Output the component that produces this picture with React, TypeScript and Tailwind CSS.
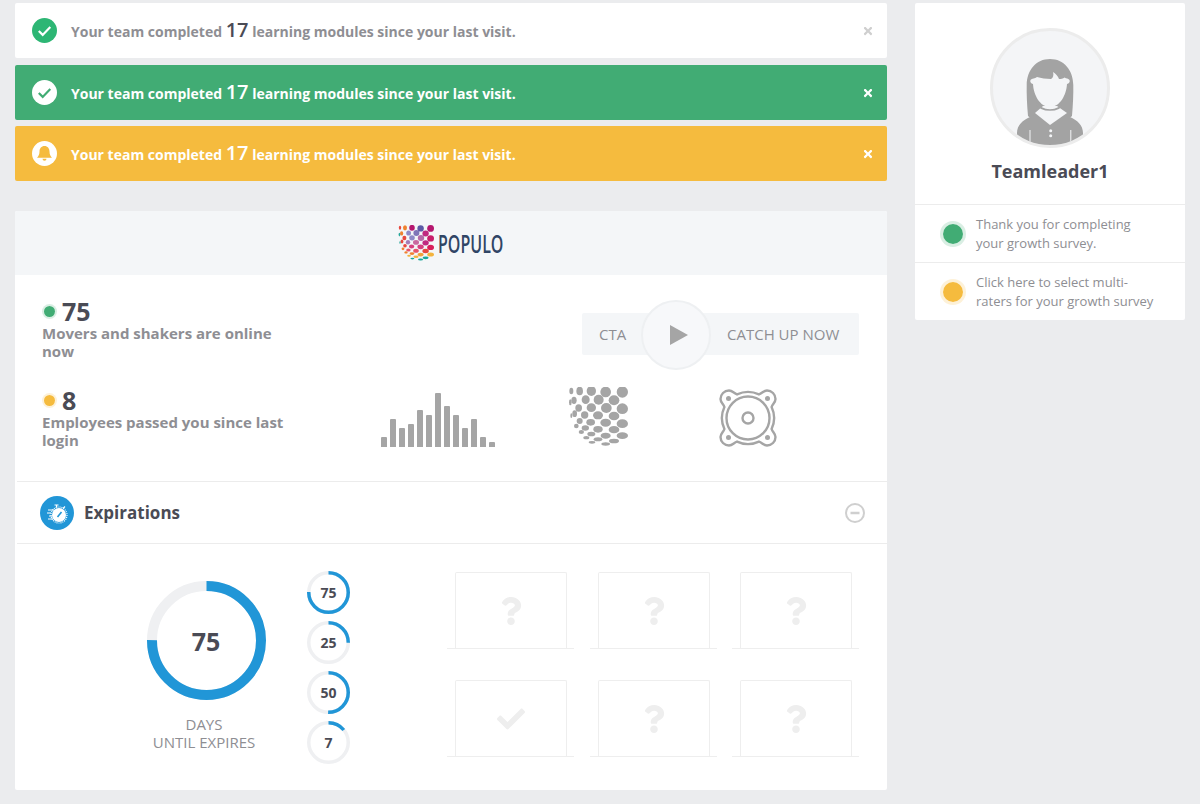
import { FaCheck, FaQuestion, FaTimes } from "react-icons/fa";

const font = { fontFamily: '"Open Sans", sans-serif' };

function CheckIcon({ bg, fg }: { bg: string; fg: string }) {
  return (
    <svg width="25" height="25" viewBox="0 0 25 25" className="shrink-0">
      <circle cx="12.5" cy="12.5" r="12.5" fill={bg} />
      <path d="M6.8 13l3.9 3.9 7.6-7.8" fill="none" stroke={fg} strokeWidth="2.2" />
    </svg>
  );
}

function BellIcon() {
  return (
    <svg width="25" height="25" viewBox="0 0 25 25" className="shrink-0">
      <circle cx="12.5" cy="12.5" r="12.5" fill="#fff" />
      <path
        d="M12.5 5c-3.100 0-5 2.400-5 5.500 0 3-.9 4.600-2.500 6.200h15c-1.600-1.600-2.500-3.200-2.500-6.200 0-3.100-1.900-5.500-5-5.500z"
        fill="#f5bb3e"
      />
      <path d="M10.500 17.700a2 2 0 0 0 4 0z" fill="#f5bb3e" />
    </svg>
  );
}

function Alert({
  className,
  icon,
  numClass,
  closeClass,
}: {
  className: string;
  icon: React.ReactNode;
  numClass: string;
  closeClass: string;
}) {
  return (
    <div className={`flex h-[55px] items-center rounded-[2px] pl-[17px] pr-[13px] ${className}`}>
      {icon}
      <p className="ml-[14px] flex-1 text-[14px] font-bold">
        Your team completed <span className={`text-[20px] font-semibold leading-none ${numClass}`}>17</span>{" "}
        learning modules since your last visit.
      </p>
      <FaTimes className={`mt-[1px] text-[12px] ${closeClass}`} />
    </div>
  );
}

// dot positions of the sphere mark: x, y, rx, ry
const sphere = [
  [50, 52, 6, 10], [75, 52, 10, 13], [110, 52, 14, 15], [153, 55, 16, 16], [203, 55, 17, 17],
  [58, 80, 8, 11], [93, 78, 12, 13], [132, 78, 15, 15], [178, 80, 16, 15],
  [47, 86, 4, 9], [72, 103, 10, 11], [110, 102, 14, 13], [155, 103, 16, 15], [203, 105, 17, 16],
  [60, 120, 7, 10], [90, 124, 11, 11], [130, 125, 15, 12], [178, 127, 16, 13],
  [50, 126, 3, 7], [75, 142, 9, 9], [108, 146, 13, 10], [153, 147, 16, 12], [203, 150, 17, 13],
  [65, 157, 7, 7], [92, 163, 11, 8], [130, 167, 14, 10], [178, 168, 16, 11],
  [80, 175, 8, 6], [110, 181, 12, 7], [153, 186, 15, 9], [203, 186, 17, 10],
  [95, 192, 9, 5], [130, 197, 13, 6], [178, 202, 15, 7],
  [112, 206, 10, 4], [153, 211, 13, 5],
];

const logoColors = [
  "#e8483f", "#f0812f", "#b5176f", "#5d5aa6", "#b5176f",
  "#f0812f", "#8f8ac7", "#7f76b8", "#c02a80",
  "#26a69a", "#e8483f", "#8f8ac7", "#b56aa8", "#c81e6b",
  "#e8483f", "#a47cb8", "#c9699f", "#c02a80",
  "#26a69a", "#e8483f", "#d6407f", "#d6407f", "#d81e5b",
  "#f0812f", "#e8566a", "#e8566a", "#e8483f",
  "#f0812f", "#f0812f", "#f0a03c", "#f3b33d",
  "#f3b33d", "#f3b33d", "#17a79a",
  "#17a79a", "#17a79a",
];

function PopuloMark() {
  return (
    <svg width="36" height="36" viewBox="40 38 180 180" className="shrink-0">
      {sphere.map(([x, y, rx, ry], i) => (
        <ellipse key={i} cx={x} cy={y} rx={rx} ry={ry} fill={logoColors[i]} />
      ))}
    </svg>
  );
}

function GreyMark() {
  return (
    <svg width="60" height="60" viewBox="40 40 180 180">
      {sphere.map(([x, y, rx, ry], i) => (
        <ellipse key={i} cx={x} cy={y} rx={rx} ry={ry} fill="#a5a5a5" />
      ))}
    </svg>
  );
}

function Bars() {
  const heights = [10, 28, 19, 23, 37, 32, 54, 41, 32, 19, 28, 10, 5];
  return (
    <div className="flex h-[54px] items-end gap-[3px]">
      {heights.map((h, i) => (
        <div key={i} className="w-[6px] rounded-t-[1px] bg-[#a5a5a5]" style={{ height: h }} />
      ))}
    </div>
  );
}

function Speaker() {
  return (
    <svg width="58" height="58" viewBox="0 0 58 58" fill="none" stroke="#a5a5a5" strokeWidth="2.4">
      <path d="M10 1.500c3.500 0 5 3 8 3.900a26 26 0 0 1 22 0c3-.9 4.500-3.900 8-3.900a8.500 8.500 0 0 1 8.500 8.500c0 3.500-3 5-3.900 8a26 26 0 0 1 0 22c.9 3 3.900 4.500 3.900 8a8.500 8.500 0 0 1-8.500 8.500c-3.500 0-5-3-8-3.900a26 26 0 0 1-22 0c-3 .9-4.500 3.900-8 3.900A8.500 8.500 0 0 1 1.500 48c0-3.500 3-5 3.900-8a26 26 0 0 1 0-22c-.9-3-3.900-4.500-3.900-8A8.500 8.500 0 0 1 10 1.500z" />
      <circle cx="29" cy="29" r="21.5" />
      <circle cx="29" cy="29" r="5.5" />
      <circle cx="9.500" cy="9.500" r="2.500" fill="#a5a5a5" stroke="none" />
      <circle cx="48.500" cy="9.500" r="2.500" fill="#a5a5a5" stroke="none" />
      <circle cx="9.500" cy="48.500" r="2.500" fill="#a5a5a5" stroke="none" />
      <circle cx="48.500" cy="48.500" r="2.500" fill="#a5a5a5" stroke="none" />
    </svg>
  );
}

function Gauge({
  size,
  stroke,
  pct,
  label,
  className,
}: {
  size: number;
  stroke: number;
  pct: number;
  label: string;
  className: string;
}) {
  const r = (size - stroke) / 2;
  const c = 2 * Math.PI * r;
  return (
    <div className="relative shrink-0" style={{ width: size, height: size }}>
      <svg width={size} height={size} className="-rotate-90">
        <circle cx={size / 2} cy={size / 2} r={r} fill="none" stroke="#eff0f2" strokeWidth={stroke} />
        <circle
          cx={size / 2}
          cy={size / 2}
          r={r}
          fill="none"
          stroke="#2196d7"
          strokeWidth={stroke}
          strokeDasharray={`${(c * pct) / 100} ${c}`}
        />
      </svg>
      <span className={`absolute inset-0 flex items-center justify-center font-bold text-[#4a4b55] ${className}`}>
        {label}
      </span>
    </div>
  );
}

function Stat({ num, label, dot, ring }: { num: string; label: string; dot: string; ring: string }) {
  return (
    <div className="h-[89px]">
      <div className="flex h-[28px] items-center pt-[2px]">
        <span className={`h-[15px] w-[15px] rounded-full border-[2px] ${dot} ${ring} bg-clip-padding`} />
        <span className="ml-[5px] text-[25px] font-bold leading-none text-[#4a4b55]">{num}</span>
      </div>
      <p className="w-[250px] text-[15px] font-bold leading-[18px] text-[#8e8e93]">{label}</p>
    </div>
  );
}

function Placeholder({ done }: { done?: boolean }) {
  return (
    <div className="border-b border-[#eeeeee] px-[8px]">
      <div className="flex h-[76px] w-[112px] items-center justify-center rounded-t-[2px] border border-b-0 border-[#eeeeee]">
        {done ? (
          <FaCheck className="text-[28px] text-[#eeeeee]" />
        ) : (
          <FaQuestion className="text-[28px] text-[#eeeeee]" />
        )}
      </div>
    </div>
  );
}

function Avatar() {
  return (
    <div className="h-[120px] w-[120px] overflow-hidden rounded-full border-[3px] border-[#ececec] bg-[#f4f5f7]">
      <svg width="114" height="114" viewBox="3 3 114 114">
        <path
          d="M60 31c-14 0-23 11-23.300 26-.2 9 .3 20 1.300 31l6 5h32l6-5c1-11 1.500-22 1.300-31C83 42 74 31 60 31z"
          fill="#a3a3a3"
        />
        <path d="M27 117v-12c0-8 6-13 13-16l6-3 14-7 14 7 6 3c7 3 13 8 13 16v12z" fill="#a3a3a3" />
        <path d="M45 85l8-7h14l10 7-17 12z" fill="#f4f5f7" />
        <path
          d="M47 49c-2 2-5 1-6.500 3-.9 1.600.6 3.500 2.500 4 .6 11 7 23 17 23s16.400-12 17-23c1.900-.5 3.400-2.400 2.500-4-1.500-2-3-1-5-2.500-1.500 1.500-3.500 1.500-5.500 1.500-1-3-3-5-6-7 1 3 0 6-2 7-5 0-10-1-14-2z"
          fill="#f4f5f7"
        />
        <path d="M46 75c3 5 8 7 14 7s11-2 14-7" fill="none" stroke="#a3a3a3" strokeWidth="1.600" />
        <path d="M40 102v14M80.800 102v14" stroke="#f4f5f7" strokeWidth="1" />
        <circle cx="60.700" cy="102.700" r="1.500" fill="#f4f5f7" />
        <circle cx="60.700" cy="107.700" r="1.500" fill="#f4f5f7" />
      </svg>
    </div>
  );
}

function StopwatchIcon() {
  return (
    <svg width="34" height="34" viewBox="0 0 34 34" className="shrink-0">
      <circle cx="17" cy="17" r="17" fill="#2196d7" />
      <circle cx="19" cy="19" r="7" fill="#fff" />
      <circle cx="19" cy="19" r="8" fill="none" stroke="#fff" strokeWidth="1.200" strokeDasharray="1 1" />
      <path d="M14.500 9h4M16.500 9v2.500M25 10.500l-2 2" stroke="#fff" strokeWidth="1.200" />
      <path d="M8 14h6M7 17h4M9 20h3M8 23h5" stroke="#fff" strokeWidth="1" />
      <path d="M17.500 21l4-5" stroke="#2196d7" strokeWidth="1.600" />
    </svg>
  );
}

function MinusIcon() {
  return (
    <svg width="20" height="20" viewBox="0 0 20 20" className="mt-[1px]">
      <circle cx="10" cy="10" r="9" fill="none" stroke="#cfcfcf" strokeWidth="2" />
      <path d="M5.500 10h9" stroke="#cfcfcf" strokeWidth="2.500" />
    </svg>
  );
}

function Note({ text, dot, ring }: { text: string[]; dot: string; ring: string }) {
  return (
    <div className="flex h-[58px] items-center border-t border-[#ececec] pl-[25px]">
      <span className={`h-[26px] w-[26px] shrink-0 rounded-full border-[3px] bg-clip-padding ${dot} ${ring}`} />
      <p className="ml-[10px] text-[13px] leading-[19px] text-[#8e8e93]">
        {text[0]}
        <br />
        {text[1]}
      </p>
    </div>
  );
}

export default function App() {
  return (
    <div className="flex min-h-screen items-start bg-[#ebecee] pl-[15px] pt-[3px]" style={font}>
      <div className="w-[872px] pb-[14px]">
        <Alert
          className="bg-white text-[#8e8e93]"
          icon={<CheckIcon bg="#2db674" fg="#fff" />}
          numClass="text-[#4a4b55]"
          closeClass="text-[#cfcfcf]"
        />
        <Alert
          className="mt-[7px] bg-[#41ac74] text-white"
          icon={<CheckIcon bg="#fff" fg="#41ac74" />}
          numClass="text-white"
          closeClass="text-white"
        />
        <Alert
          className="mt-[6px] bg-[#f5bb3e] text-white"
          icon={<BellIcon />}
          numClass="text-white"
          closeClass="text-white"
        />

        <div className="mt-[30px] rounded-[2px] bg-white">
          <div className="flex h-[64px] items-center justify-center gap-[4px] rounded-t-[2px] bg-[#f4f6f8]">
            <PopuloMark />
            <span className="inline-block w-[66px] origin-left scale-x-[0.64] whitespace-nowrap text-[25px] font-semibold leading-none text-[#2f4565]">
              POPULO
            </span>
          </div>

          <div className="flex h-[206px] pl-[27px] pt-[21px]">
            <div className="w-[339px]">
              <Stat
                num="75"
                label="Movers and shakers are online now"
                dot="bg-[#41ac74]"
                ring="border-[#41ac7433]"
              />
              <Stat
                num="8"
                label="Employees passed you since last login"
                dot="bg-[#f5bb3e]"
                ring="border-[#f5bb3e33]"
              />
            </div>
            <div className="w-[478px]">
              <div className="ml-[201px] mt-[17px] flex h-[42px] w-[277px] items-center rounded-[2px] bg-[#f4f6f8] pl-[17px] pt-[1px] text-[15px] text-[#8e8e93]">
                <span className="w-[42px]">CTA</span>
                <span className="-my-[14px] flex h-[70px] w-[70px] items-center justify-center rounded-full border-[2px] border-[#eef0f2] bg-[#f7f8fa] pl-[5px]">
                  <svg width="20" height="22" viewBox="0 0 20 22">
                    <path d="M1 1l18 10L1 21z" fill="#a5a5a5" />
                  </svg>
                </span>
                <span className="ml-[16px]">CATCH UP NOW</span>
              </div>
              <div className="mt-[32px] flex items-end">
                <div className="ml-0">
                  <Bars />
                </div>
                <div className="ml-[73px]">
                  <GreyMark />
                </div>
                <div className="ml-[91px]">
                  <Speaker />
                </div>
              </div>
            </div>
          </div>

          <div className="ml-[2px] flex h-[63px] items-center border-y border-[#ececec] pl-[23px] pr-[22px]">
            <StopwatchIcon />
            <h2 className="ml-[10px] flex-1 text-[17px] font-bold text-[#4a4b55]">Expirations</h2>
            <MinusIcon />
          </div>

          <div className="flex h-[246px] pl-[111px] pt-[26px]">
            <div className="flex w-[160px] flex-col items-center pt-[11px]">
              <Gauge size={119} stroke={10} pct={75} label="75" className="pt-[2px] text-[25px]" />
              <p className="mt-[15px] pr-[4px] text-center text-[15px] leading-[18px] text-[#8e8e93]">
                DAYS
                <br />
                UNTIL EXPIRES
              </p>
            </div>
            <div className="ml-[21px] mt-[1px] flex w-[44px] flex-col gap-[7px]">
              <Gauge size={43} stroke={3.5} pct={75} label="75" className="pb-[1px] text-[14px]" />
              <Gauge size={43} stroke={3.5} pct={25} label="25" className="pb-[1px] text-[14px]" />
              <Gauge size={43} stroke={3.5} pct={50} label="50" className="pb-[1px] text-[14px]" />
              <Gauge size={43} stroke={3.5} pct={14} label="7" className="pb-[1px] text-[14px]" />
            </div>
            <div className="ml-[96px] mt-[2px] grid h-[185px] w-[412px] grid-cols-[127px_127px_127px] gap-x-[15.500px] gap-y-[31px]">
              <Placeholder />
              <Placeholder />
              <Placeholder />
              <Placeholder done />
              <Placeholder />
              <Placeholder />
            </div>
          </div>
        </div>
      </div>

      <div className="ml-[28px] w-[270px] rounded-[2px] bg-white">
        <div className="flex h-[201px] flex-col items-center pt-[25px]">
          <Avatar />
          <h3 className="mt-[10px] text-[18px] font-bold text-[#4a4b55]">Teamleader1</h3>
        </div>
        <Note
          text={["Thank you for completing", "your growth survey."]}
          dot="bg-[#41ac74]"
          ring="border-[#41ac7433]"
        />
        <Note
          text={["Click here to select multi-", "raters for your growth survey"]}
          dot="bg-[#f5bb3e]"
          ring="border-[#f5bb3e33]"
        />
      </div>
    </div>
  );
}
